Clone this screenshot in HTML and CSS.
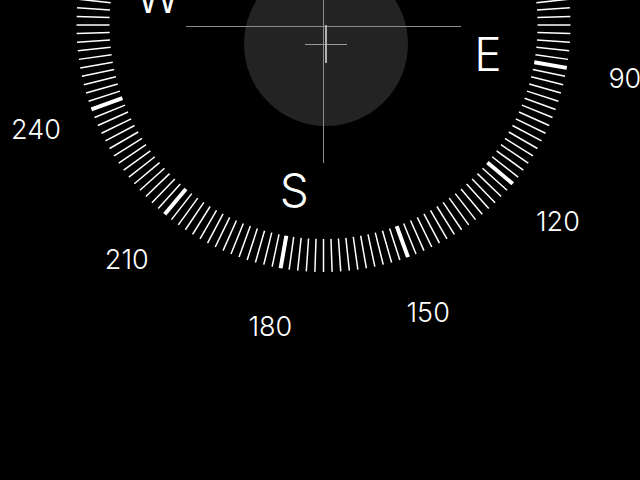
FILE: index.html
```html
<!DOCTYPE html>
<html lang="en">
<head>
    <meta charset="UTF-8">
    <meta name="viewport" content="width=device-width, initial-scale=1.0">
    <title>Compass</title>
    <link rel="stylesheet" href="styles.css">
</head>
<body>
    <div class="compass">
        <svg class="dial" width="640" height="480" viewBox="0 0 640 480">
            <circle class="level-bubble" cx="326" cy="44" r="82"></circle>
            <g id="ticks"></g>
            <g id="labels"></g>
            <line class="guide" x1="186" y1="26.5" x2="461" y2="26.5"></line>
            <line class="guide" x1="323.5" y1="0" x2="323.5" y2="163"></line>
            <line class="cross" x1="305" y1="44.5" x2="347" y2="44.5"></line>
            <line class="cross cross-v" x1="326" y1="25" x2="326" y2="63"></line>
        </svg>
    </div>

    <script>
        const ns = 'http://www.w3.org/2000/svg';
        const cx = 323.5;
        const cy = 25;
        const heading = 10;

        function point(bearing, r) {
            const a = (bearing + heading) * Math.PI / 180;
            return [cx + r * Math.sin(a), cy - r * Math.cos(a)];
        }

        function addTicks() {
            const ticks = document.getElementById('ticks');
            for (let b = 0; b < 360; b += 2) {
                const inner = point(b, 214);
                const outer = point(b, 247);
                const line = document.createElementNS(ns, 'line');
                line.setAttribute('x1', inner[0]);
                line.setAttribute('y1', inner[1]);
                line.setAttribute('x2', outer[0]);
                line.setAttribute('y2', outer[1]);
                line.classList.add('tick');
                if (b % 30 === 0) {
                    line.classList.add('major');
                }
                ticks.appendChild(line);
            }
        }

        function addLabel(text, bearing, r, cls) {
            const labels = document.getElementById('labels');
            const p = point(bearing, r);
            const label = document.createElementNS(ns, 'text');
            label.setAttribute('x', p[0]);
            label.setAttribute('y', p[1]);
            label.classList.add(cls);
            label.textContent = text;
            labels.appendChild(label);
        }

        function addLabels() {
            // only the part of the dial that is on screen
            for (let b = 90; b <= 240; b += 30) {
                addLabel(String(b), b, 306, 'degree');
            }
            addLabel('E', 90, 167, 'cardinal');
            addLabel('S', 180, 168, 'cardinal');
            addLabel('W', 270, 168, 'cardinal');
        }

        addTicks();
        addLabels();
    </script>
</body>
</html>
```

FILE: styles.css
```css
body {
    margin: 0;
    padding: 0;
    background-color: #000;
    font-family: Inter, "Liberation Sans", sans-serif;
    overflow: hidden;
}
.compass {
    width: 640px;
    height: 480px;
}
.dial {
    display: block;
}
.level-bubble {
    fill: #232323;
}
.tick {
    stroke: #fff;
    stroke-width: 1.5;
}
.tick.major {
    stroke-width: 4;
}
.degree {
    fill: #fff;
    font-size: 27px;
    font-weight: 300;
    text-anchor: middle;
    dominant-baseline: central;
}
.cardinal {
    fill: #fff;
    font-size: 46px;
    font-weight: 300;
    text-anchor: middle;
    dominant-baseline: central;
}
.guide {
    stroke: #8c8c8c;
    stroke-width: 1;
}
.cross {
    stroke: #9a9a9a;
    stroke-width: 1;
}
.cross-v {
    stroke: #b0b0b0;
    stroke-width: 2;
}
```
